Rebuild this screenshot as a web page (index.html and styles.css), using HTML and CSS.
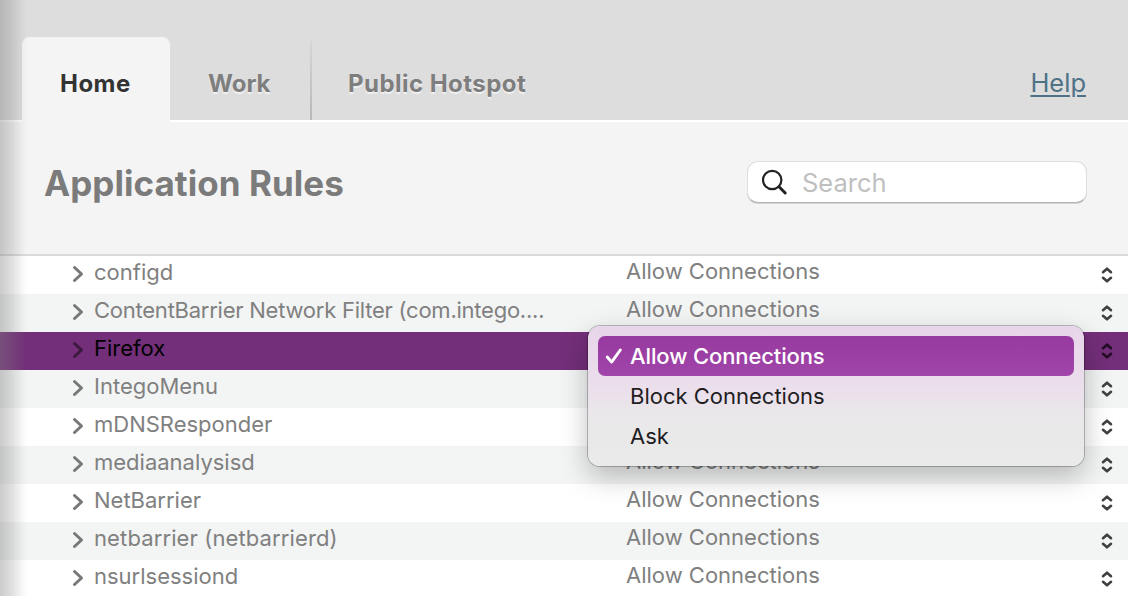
FILE: index.html
```html
<!DOCTYPE html>
<html lang="en">
<head>
    <meta charset="UTF-8">
    <meta name="viewport" content="width=device-width, initial-scale=1.0">
    <title>Application Rules</title>
    <link rel="stylesheet" href="styles.css">
</head>
<body>
    <svg class="symbols" width="0" height="0">
        <symbol id="chevron" viewBox="0 0 12 18"><path d="M2.5 2.5 L9.5 9 L2.5 15.5"/></symbol>
        <symbol id="updown" viewBox="0 0 12 18"><path d="M2 6.2 L6 2.7 L10 6.2 M2 11.8 L6 15.3 L10 11.8"/></symbol>
    </svg>
    <div class="window">
        <nav class="tabs">
            <a class="tab active">Home</a>
            <a class="tab work">Work</a>
            <a class="tab hotspot">Public Hotspot</a>
            <a class="help">Help</a>
        </nav>
        <header class="toolbar">
            <h1>Application Rules</h1>
            <div class="search">
                <svg class="glass" width="28" height="28" viewBox="0 0 28 28"><circle cx="11.2" cy="12" r="9.2"/><path d="M18 18.8 L24.2 25"/></svg>
                <span>Search</span>
            </div>
        </header>
        <ul class="rules">
            <li><svg class="chevron"><use href="#chevron"/></svg><span class="name">configd</span><span class="action">Allow Connections</span><svg class="updown"><use href="#updown"/></svg></li>
            <li><svg class="chevron"><use href="#chevron"/></svg><span class="name long">ContentBarrier Network Filter (com.intego....</span><span class="action">Allow Connections</span><svg class="updown"><use href="#updown"/></svg></li>
            <li class="selected">
                <svg class="chevron"><use href="#chevron"/></svg><span class="name">Firefox</span><span class="action"></span><svg class="updown"><use href="#updown"/></svg>
                <div class="menu">
                    <div class="item checked"><svg class="check" width="18" height="18" viewBox="0 0 18 18"><path d="M2.2 10 L6.7 15 L15.3 3"/></svg><span>Allow Connections</span></div>
                    <div class="item"><span>Block Connections</span></div>
                    <div class="item"><span>Ask</span></div>
                </div>
            </li>
            <li><svg class="chevron"><use href="#chevron"/></svg><span class="name">IntegoMenu</span><span class="action"></span><svg class="updown"><use href="#updown"/></svg></li>
            <li><svg class="chevron"><use href="#chevron"/></svg><span class="name">mDNSResponder</span><span class="action"></span><svg class="updown"><use href="#updown"/></svg></li>
            <li><svg class="chevron"><use href="#chevron"/></svg><span class="name">mediaanalysisd</span><span class="action">Allow Connections</span><svg class="updown"><use href="#updown"/></svg></li>
            <li><svg class="chevron"><use href="#chevron"/></svg><span class="name">NetBarrier</span><span class="action">Allow Connections</span><svg class="updown"><use href="#updown"/></svg></li>
            <li><svg class="chevron"><use href="#chevron"/></svg><span class="name wide">netbarrier (netbarrierd)</span><span class="action">Allow Connections</span><svg class="updown"><use href="#updown"/></svg></li>
            <li><svg class="chevron"><use href="#chevron"/></svg><span class="name">nsurlsessiond</span><span class="action">Allow Connections</span><svg class="updown"><use href="#updown"/></svg></li>
        </ul>
        <div class="edge-shadow"></div>
    </div>
</body>
</html>
```
FILE: styles.css
```css
* {
    box-sizing: border-box;
}
body {
    margin: 0;
    font-family: Inter, "Liberation Sans", sans-serif;
    background: #fff;
    overflow: hidden;
}
svg {
    fill: none;
    stroke-linecap: round;
    stroke-linejoin: round;
    flex: none;
}
.symbols {
    position: absolute;
}
.window {
    position: relative;
    width: 1128px;
    height: 596px;
    overflow: hidden;
}

/* tab bar */
.tabs {
    display: flex;
    align-items: flex-end;
    height: 122px;
    padding-left: 22px;
    background: linear-gradient(#dddddd, #dddddd 120px, #fff 120px);
}
.tab {
    height: 85px;
    padding-bottom: 2px;
    line-height: 93px;
    font-size: 24px;
    font-weight: 700;
    color: #7e7e7e;
    text-shadow: 0 2px 1px rgba(255, 255, 255, 0.6);
    white-space: nowrap;
}
.tab.active {
    width: 148px;
    padding-left: 38px;
    border-radius: 8px 8px 0 0;
    background: #f4f4f4;
    color: #333;
    letter-spacing: 0.45px;
}
.tab.work {
    width: 142px;
    padding-left: 38px;
    background: linear-gradient(rgba(184, 184, 184, 0.2), #b8b8b8) 140px 4px / 2px 79px no-repeat;
}
.tab.hotspot {
    padding-left: 36px;
    letter-spacing: 0.46px;
}
.help {
    height: 85px;
    margin-left: auto;
    margin-right: 42px;
    line-height: 91px;
    font-size: 25.5px;
    color: #4f7286;
    text-decoration: underline;
    text-decoration-thickness: 2px;
    text-underline-offset: 3px;
}

/* title and search */
.toolbar {
    display: flex;
    justify-content: space-between;
    align-items: flex-start;
    height: 134px;
    padding: 39px 41px 0 44px;
    background: #f4f4f4;
    border-bottom: 2px solid #dadada;
}
h1 {
    margin: 0;
    line-height: 44px;
    font-size: 35px;
    font-weight: 700;
    letter-spacing: 0.05px;
    color: #7b7b7b;
    white-space: nowrap;
}
.search {
    display: flex;
    align-items: center;
    width: 340px;
    height: 42px;
    padding-left: 13px;
    border: 1px solid #dedede;
    border-bottom-color: #b5b5b5;
    border-radius: 11px;
    background: #fff;
    box-shadow: 0 1px 0 #d2d2d2;
    font-size: 25.5px;
    color: #bfbfbf;
}
.glass {
    margin-right: 13px;
    stroke: #222;
    stroke-width: 2.2;
}
.glass path {
    stroke-width: 3;
}

/* rules list */
.rules {
    margin: 0;
    padding: 0;
    list-style: none;
}
.rules li {
    position: relative;
    display: flex;
    height: 38px;
    padding-left: 72px;
    font-size: 22px;
    line-height: 32px;
    color: #808080;
    white-space: nowrap;
}
.rules li:nth-child(even) {
    background: #f3f4f4;
}
.rules li.selected {
    background: #732f79;
    color: #000;
}
.chevron {
    width: 12px;
    height: 18px;
    margin: 9px 10px 0 0;
    stroke: #777;
    stroke-width: 3;
}
.selected .chevron {
    stroke: #3c1a40;
}
.name {
    width: 532px;
}
.name.long {
    letter-spacing: -0.24px;
}
.name.wide {
    letter-spacing: 0.12px;
}
.action {
    width: 475px;
    line-height: 30px;
}
.updown {
    width: 12px;
    height: 18px;
    margin-top: 10px;
    stroke: #404040;
    stroke-width: 2.6;
}
.selected .updown {
    stroke: #220d24;
}

/* popup menu */
.menu {
    position: absolute;
    z-index: 1;
    left: 588px;
    top: -6px;
    width: 496px;
    height: 140px;
    padding: 10px;
    border-radius: 12px;
    background: linear-gradient(#e8d5e9, #ebdfec 45%, #eae8ea 65%, #eaeaea);
    box-shadow: 0 0 0 1px rgba(0, 0, 0, 0.24), 0 10px 28px rgba(0, 0, 0, 0.26);
}
.item {
    display: flex;
    align-items: center;
    height: 40px;
    padding-left: 32px;
    border-radius: 7px;
    color: #1f1d1f;
}
.item.checked {
    padding-left: 7px;
    background: linear-gradient(#983a9f, #a045aa);
    color: #fff;
    font-weight: 500;
    letter-spacing: -0.12px;
}
.check {
    margin-right: 7px;
    stroke: #fff;
    stroke-width: 3;
}

/* shadow cast by the left pane */
.edge-shadow {
    position: absolute;
    z-index: 2;
    left: 0;
    top: 0;
    width: 27px;
    height: 100%;
    background: linear-gradient(to right, rgba(125, 125, 125, 0.4), rgba(125, 125, 125, 0.24) 45%, rgba(125, 125, 125, 0.07) 80%, rgba(125, 125, 125, 0));
}
```
